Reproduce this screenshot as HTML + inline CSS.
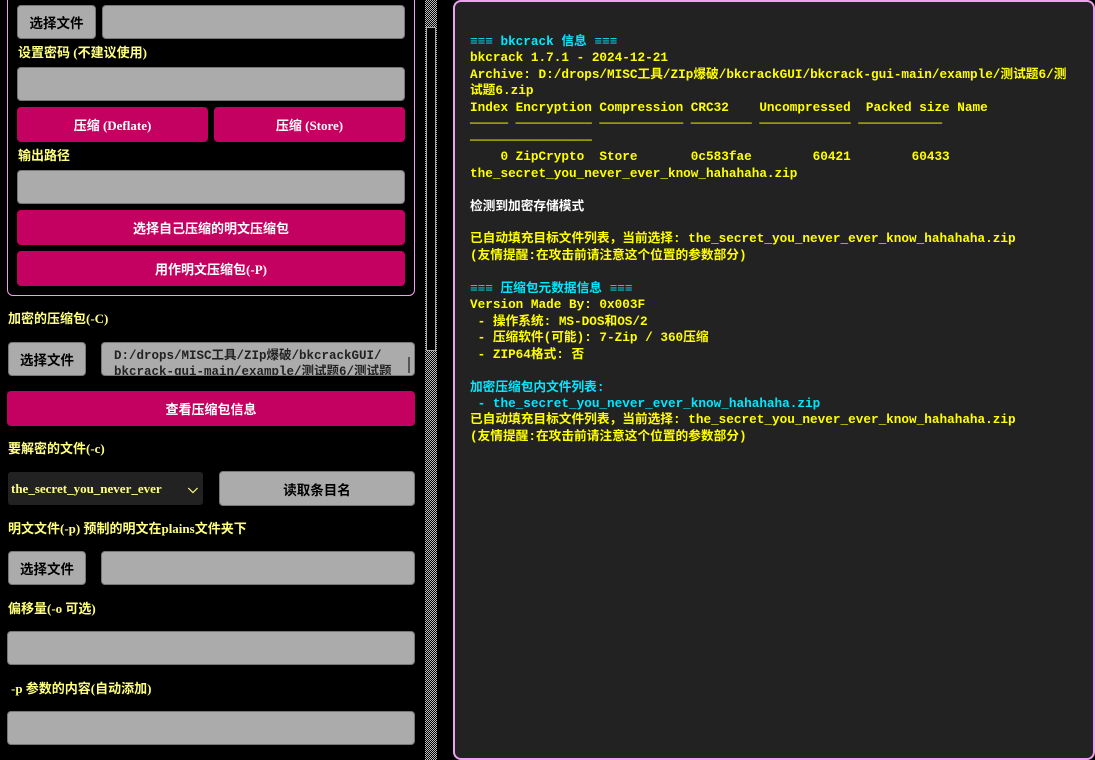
<!DOCTYPE html>
<html><head><meta charset="utf-8"><style>
*{margin:0;padding:0;box-sizing:border-box}
body{width:1095px;height:760px;background:#000;position:relative;overflow:hidden;font-family:"Liberation Serif","Noto Sans CJK SC",serif;font-weight:bold;font-size:13px}
.a{position:absolute}
.btn{position:absolute;background:#ababab;border:1px solid #777;border-radius:4px;color:#000;display:flex;align-items:center;justify-content:center;font-size:13.5px}
.inp{position:absolute;background:#ababab;border:1px solid #777;border-radius:4px}
.pk{position:absolute;background:#c40060;border-radius:4px;color:#fff;display:flex;align-items:center;justify-content:center;font-size:13px}
.lb{position:absolute;color:#ffff80;font-size:13px;line-height:16px}
pre{position:absolute;left:470px;top:34px;font-family:"Liberation Mono","Noto Sans CJK SC",monospace;font-weight:bold;font-size:12.7px;line-height:16.45px;color:#ffff00;white-space:pre}
.c{color:#00e8ff}.w{color:#fff}
</style></head><body>
<div class="a" style="left:7px;top:-10px;width:408px;height:306px;border:1px solid #f0a0f0;border-radius:6px"></div>
<div class="btn" style="left:17px;top:5px;width:79px;height:34px">选择文件</div>
<div class="inp" style="left:102px;top:5px;width:303px;height:34px"></div>
<div class="lb" style="left:18px;top:45px">设置密码 (不建议使用)</div>
<div class="inp" style="left:17px;top:67px;width:388px;height:34px"></div>
<div class="pk" style="left:17px;top:107px;width:191px;height:35px">压缩 (Deflate)</div>
<div class="pk" style="left:214px;top:107px;width:191px;height:35px">压缩 (Store)</div>
<div class="lb" style="left:18px;top:148px">输出路径</div>
<div class="inp" style="left:17px;top:170px;width:388px;height:34px"></div>
<div class="pk" style="left:17px;top:210px;width:388px;height:35px">选择自己压缩的明文压缩包</div>
<div class="pk" style="left:17px;top:251px;width:388px;height:35px">用作明文压缩包(-P)</div>

<div class="lb" style="left:8px;top:311px">加密的压缩包(-C)</div>
<div class="btn" style="left:8px;top:342px;width:78px;height:34px">选择文件</div>
<div class="inp" style="left:101px;top:342px;width:314px;height:34px;overflow:hidden;font-family:'Liberation Mono','Noto Sans CJK SC',monospace;font-size:12.5px;line-height:16px;color:#222;padding:5px 0 0 12px">D:/drops/MISC工具/ZIp爆破/bkcrackGUI/<br>bkcrack-gui-main/example/测试题6/测试题</div>
<div class="a" style="left:408px;top:357px;width:2px;height:16px;background:#555"></div>
<div class="pk" style="left:7px;top:391px;width:408px;height:35px">查看压缩包信息</div>
<div class="lb" style="left:8px;top:441px">要解密的文件(-c)</div>
<div class="a" style="left:8px;top:472px;width:195px;height:33px;background:#222;border-radius:3px;color:#ffff80;font-size:13px;line-height:33px;padding-left:3px;overflow:hidden;white-space:nowrap">the_secret_you_never_ever<span style="position:absolute;left:180px;color:#ffff80">⌵</span></div>
<div class="btn" style="left:219px;top:471px;width:196px;height:35px">读取条目名</div>
<div class="lb" style="left:8px;top:521px">明文文件(-p) 预制的明文在plains文件夹下</div>
<div class="btn" style="left:8px;top:551px;width:78px;height:34px">选择文件</div>
<div class="inp" style="left:101px;top:551px;width:314px;height:34px"></div>
<div class="lb" style="left:8px;top:601px">偏移量(-o 可选)</div>
<div class="inp" style="left:7px;top:631px;width:408px;height:34px"></div>
<div class="lb" style="left:11px;top:681px">-p 参数的内容(自动添加)</div>
<div class="inp" style="left:7px;top:711px;width:408px;height:34px"></div>

<div class="a" style="left:425px;top:0;width:12px;height:760px;background:repeating-conic-gradient(#bbb 0 25%,#000 0 50%) 0 0/2px 2px"></div>
<div class="a" style="left:426px;top:27px;width:10px;height:324px;background:#000;border:1px solid #aaa"></div>

<div class="a" style="left:453px;top:0;width:642px;height:760px;background:#222;border:2px solid #f0a0f0;border-radius:8px"></div>
<pre><span class="c">≡≡≡ bkcrack 信息 ≡≡≡</span>
bkcrack 1.7.1 - 2024-12-21
Archive: D:/drops/MISC工具/ZIp爆破/bkcrackGUI/bkcrack-gui-main/example/测试题6/测
试题6.zip
Index Encryption Compression CRC32    Uncompressed  Packed size Name
───── ────────── ─────────── ──────── ──────────── ───────────
────────────────
    0 ZipCrypto  Store       0c583fae        60421        60433
the_secret_you_never_ever_know_hahahaha.zip

<span class="w">检测到加密存储模式</span>

已自动填充目标文件列表，当前选择: the_secret_you_never_ever_know_hahahaha.zip
(友情提醒:在攻击前请注意这个位置的参数部分)

<span class="c">≡≡≡ 压缩包元数据信息 ≡≡≡</span>
Version Made By: 0x003F
 - 操作系统: MS-DOS和OS/2
 - 压缩软件(可能): 7-Zip / 360压缩
 - ZIP64格式: 否

<span class="c">加密压缩包内文件列表:
 - the_secret_you_never_ever_know_hahahaha.zip</span>
已自动填充目标文件列表，当前选择: the_secret_you_never_ever_know_hahahaha.zip
(友情提醒:在攻击前请注意这个位置的参数部分)</pre>
</body></html>
